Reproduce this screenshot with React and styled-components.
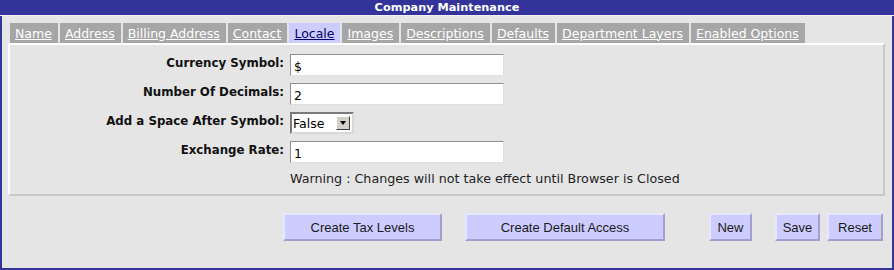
import React from 'react'
import styled, { createGlobalStyle } from 'styled-components'

const GlobalStyle = createGlobalStyle`
  html, body {
    margin: 0;
    padding: 0;
    background: #e5e5e5;
  }
  body {
    font-family: "DejaVu Sans", Verdana, sans-serif;
  }
`

const tabs = ['Name', 'Address', 'Billing Address', 'Contact', 'Locale', 'Images', 'Descriptions', 'Defaults', 'Department Layers', 'Enabled Options']

const Frame = styled.div`
  width: 894px;
  height: 270px;
  box-sizing: border-box;
  border: 2px solid #333399;
  border-top: none;
  background: #e5e5e5;
  display: flex;
  flex-direction: column;
`

const TitleBar = styled.div`
  height: 15px;
  margin: 0 -2px;
  background: #333399;
  color: #fff;
  font-weight: bold;
  font-size: 11.3px;
  line-height: 15px;
  text-align: center;
  border-bottom: 1px solid #f2f2f2;
`

const TabStrip = styled.div`
  display: flex;
  gap: 2px;
  margin: 7px 0 0 8px;
  height: 20px;
`

const Tab = styled.a`
  display: flex;
  align-items: center;
  padding: 0 6px 0 5px;
  font-size: 12.5px;
  color: ${p => (p.$active ? '#000066' : '#ffffff')};
  background: ${p => (p.$active ? '#ccccff' : '#a6a6a6')};
  text-decoration: underline;
  cursor: pointer;
`

const Panel = styled.div`
  margin: 0 7px 0 6px;
  height: 153px;
  box-sizing: border-box;
  border: 2px solid;
  border-color: #ffffff #c9c9c9 #c9c9c9 #ffffff;
  padding-top: 9px;
`

const Form = styled.div`
  display: grid;
  grid-template-columns: 274px 1fr;
  column-gap: 6px;
  row-gap: 7px;
  align-items: center;
`

const Label = styled.label`
  text-align: right;
  font-weight: bold;
  font-size: 11.8px;
  color: #111;
  align-self: start;
  padding-top: 2px;
`

const TextInput = styled.input`
  width: 214px;
  height: 22px;
  box-sizing: border-box;
  border: 1px solid;
  border-color: #8f8f8f #e0e0e0 #e0e0e0 #8f8f8f;
  background: #fff;
  font-family: "DejaVu Sans", Verdana, sans-serif;
  font-size: 12.5px;
  padding: 3px 0 0 3px;
  color: #000;
  outline: none;
`

const Select = styled.div`
  width: 64px;
  height: 22px;
  box-sizing: border-box;
  border: 2px solid;
  border-color: #7a7a7a #d8d8d8 #d8d8d8 #7a7a7a;
  background: #fff;
  display: flex;
  align-items: center;
  justify-content: space-between;
  padding: 0 2px 0 1px;
  font-size: 12.5px;
  color: #000;
`

const ArrowButton = styled.span`
  width: 14px;
  height: 14px;
  box-sizing: border-box;
  background: #d4d0c8;
  border: 1px solid;
  border-color: #ffffff #404040 #404040 #ffffff;
  display: flex;
  align-items: center;
  justify-content: center;

  &::after {
    content: '';
    border-left: 3.5px solid transparent;
    border-right: 3.5px solid transparent;
    border-top: 4px solid #000;
  }
`

const Warning = styled.div`
  grid-column: 2;
  font-size: 12.7px;
  color: #222;
  padding-top: 1px;
`

const ButtonBar = styled.div`
  display: flex;
  margin-top: 17px;
`

const Button = styled.button`
  width: ${p => p.$w}px;
  height: 28px;
  margin-left: ${p => p.$ml}px;
  box-sizing: border-box;
  background: #ccccff;
  border: 2px solid;
  border-color: #e6e6ff #a0a0c8 #a0a0c8 #e6e6ff;
  font-family: "Liberation Sans", Arial, sans-serif;
  font-size: 13px;
  color: #1a1a1a;
  padding: 0;
  cursor: pointer;
`

const rows = [
  { label: 'Currency Symbol:', value: '$' },
  { label: 'Number Of Decimals:', value: '2' },
]

export default function App() {
  return (
    <>
      <GlobalStyle />
      <Frame>
        <TitleBar>Company Maintenance</TitleBar>
        <TabStrip>
          {tabs.map(t => (
            <Tab key={t} $active={t === 'Locale'}>{t}</Tab>
          ))}
        </TabStrip>
        <Panel>
          <Form>
            {rows.map(r => (
              <React.Fragment key={r.label}>
                <Label>{r.label}</Label>
                <TextInput defaultValue={r.value} />
              </React.Fragment>
            ))}
            <Label>Add a Space After Symbol:</Label>
            <Select>
              <span>False</span>
              <ArrowButton />
            </Select>
            <Label>Exchange Rate:</Label>
            <TextInput defaultValue="1" />
            <Warning>Warning : Changes will not take effect until Browser is Closed</Warning>
          </Form>
        </Panel>
        <ButtonBar>
          <Button $w={159} $ml={281}>Create Tax Levels</Button>
          <Button $w={200} $ml={23}>Create Default Access</Button>
          <Button $w={43} $ml={44}>New</Button>
          <Button $w={45} $ml={23}>Save</Button>
          <Button $w={56} $ml={7}>Reset</Button>
        </ButtonBar>
      </Frame>
    </>
  )
}
